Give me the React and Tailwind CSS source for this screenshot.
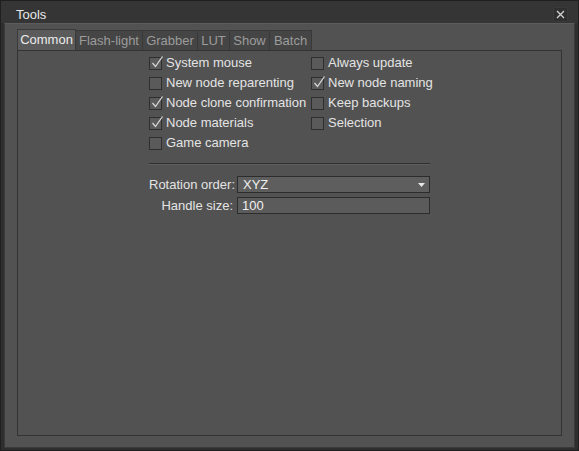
import { useState } from "react";

const Check = ({ checked, label, onToggle }) => (
  <div className="flex h-[20px] items-center cursor-default" onClick={onToggle}>
    <div className="relative w-[13px] h-[13px] border border-[#2f2f2f] bg-[#5a5a5a] mr-[4px] shrink-0">
      {checked && (
        <svg className="absolute left-[1px] top-[-2px]" width="13" height="13" viewBox="0 0 13 13">
          <path d="M1.5 7 L4.5 10.5 L11.5 0.5" fill="none" stroke="#d6d6d6" strokeWidth="1.3" />
        </svg>
      )}
    </div>
    <span className="whitespace-nowrap">{label}</span>
  </div>
);

const tabs = [
  { name: "Common", w: "w-[59px]" },
  { name: "Flash-light", w: "w-[67px]" },
  { name: "Grabber", w: "w-[55px]" },
  { name: "LUT", w: "w-[32px]" },
  { name: "Show", w: "w-[40px]" },
  { name: "Batch", w: "w-[42px]" },
];

export default function App() {
  const [opts, setOpts] = useState({
    systemMouse: true,
    reparent: false,
    cloneConfirm: true,
    materials: true,
    gameCamera: false,
    alwaysUpdate: false,
    naming: true,
    backups: false,
    selection: false,
  });
  const toggle = (k) => setOpts((o) => ({ ...o, [k]: !o[k] }));

  return (
    <div
      className="w-[579px] h-[451px] bg-[#2e2e2e] flex flex-col text-[13px] text-[#e4e4e4] border border-[#1f1f1f]"
      style={{ fontFamily: '"Liberation Sans", Arial, sans-serif' }}
    >
      {/* title bar */}
      <div className="h-[22px] flex items-center justify-between pl-[15px] pr-[10px] pt-[5px] bg-[#353535]">
        <span className="text-[#e8e8e8]">Tools</span>
        <div className="w-[15px] h-[15px] rounded-[2px] bg-[#2f2f2f] border border-[#3a3a3a] flex items-center justify-center">
          <svg width="9" height="9" viewBox="0 0 9 9">
            <path d="M1 1 L8 8 M8 1 L1 8" stroke="#d0d0d0" strokeWidth="1.4" />
          </svg>
        </div>
      </div>

      {/* body */}
      <div className="flex-1 mx-[3px] mb-[2px] bg-[#525252] border border-[#3a3a3a] border-t-[#5c5c5c] pt-[5px] pl-[12px] pr-[12px] pb-[11px] flex flex-col">
        <div className="flex h-[21px]">
          {tabs.map((t, i) => (
            <div
              key={t.name}
              className={
                i === 0
                  ? `${t.w} flex items-center justify-center bg-[#5b5b5b] border border-[#3a3a3a] border-b-0 text-[#ececec]`
                  : `${t.w} flex items-center justify-center bg-[#454545] border border-[#393939] border-b-0 border-l-0 text-[#9c9c9c] mt-[1px]`
              }
            >
              {t.name}
            </div>
          ))}
        </div>

        <div className="flex-1 border border-[#333333] bg-[#525252] pt-[2px]">
          <div className="w-[281px] mx-auto">
            <div className="grid grid-cols-[162px_1fr]">
              <div className="flex flex-col">
                <Check checked={opts.systemMouse} label="System mouse" onToggle={() => toggle("systemMouse")} />
                <Check checked={opts.reparent} label="New node reparenting" onToggle={() => toggle("reparent")} />
                <Check checked={opts.cloneConfirm} label="Node clone confirmation" onToggle={() => toggle("cloneConfirm")} />
                <Check checked={opts.materials} label="Node materials" onToggle={() => toggle("materials")} />
                <Check checked={opts.gameCamera} label="Game camera" onToggle={() => toggle("gameCamera")} />
              </div>
              <div className="flex flex-col">
                <Check checked={opts.alwaysUpdate} label="Always update" onToggle={() => toggle("alwaysUpdate")} />
                <Check checked={opts.naming} label="New node naming" onToggle={() => toggle("naming")} />
                <Check checked={opts.backups} label="Keep backups" onToggle={() => toggle("backups")} />
                <Check checked={opts.selection} label="Selection" onToggle={() => toggle("selection")} />
              </div>
            </div>

            <div className="mt-[10px] border-t border-[#2f2f2f] border-b border-b-[#5e5e5e]" />

            <div className="mt-[11px] grid grid-cols-[84px_1fr] gap-x-[4px] gap-y-[4px] items-center leading-[17px]">
              <span className="text-right whitespace-nowrap">Rotation order:</span>
              <div className="h-[17px] border border-[#2c2c2c] bg-[#5e5e5e] flex items-center justify-between pl-[5px] pr-[4px]">
                <span className="text-[#f0f0f0]">XYZ</span>
                <svg width="7" height="4" viewBox="0 0 7 4">
                  <path d="M0 0 H7 L3.5 4 Z" fill="#e8e8e8" />
                </svg>
              </div>
              <span className="text-right whitespace-nowrap">Handle size:</span>
              <div className="h-[17px] border border-[#2c2c2c] bg-[#5b5b5b] flex items-center pl-[4px]">
                <span className="text-[#f0f0f0]">100</span>
              </div>
            </div>
          </div>
        </div>
      </div>
    </div>
  );
}
